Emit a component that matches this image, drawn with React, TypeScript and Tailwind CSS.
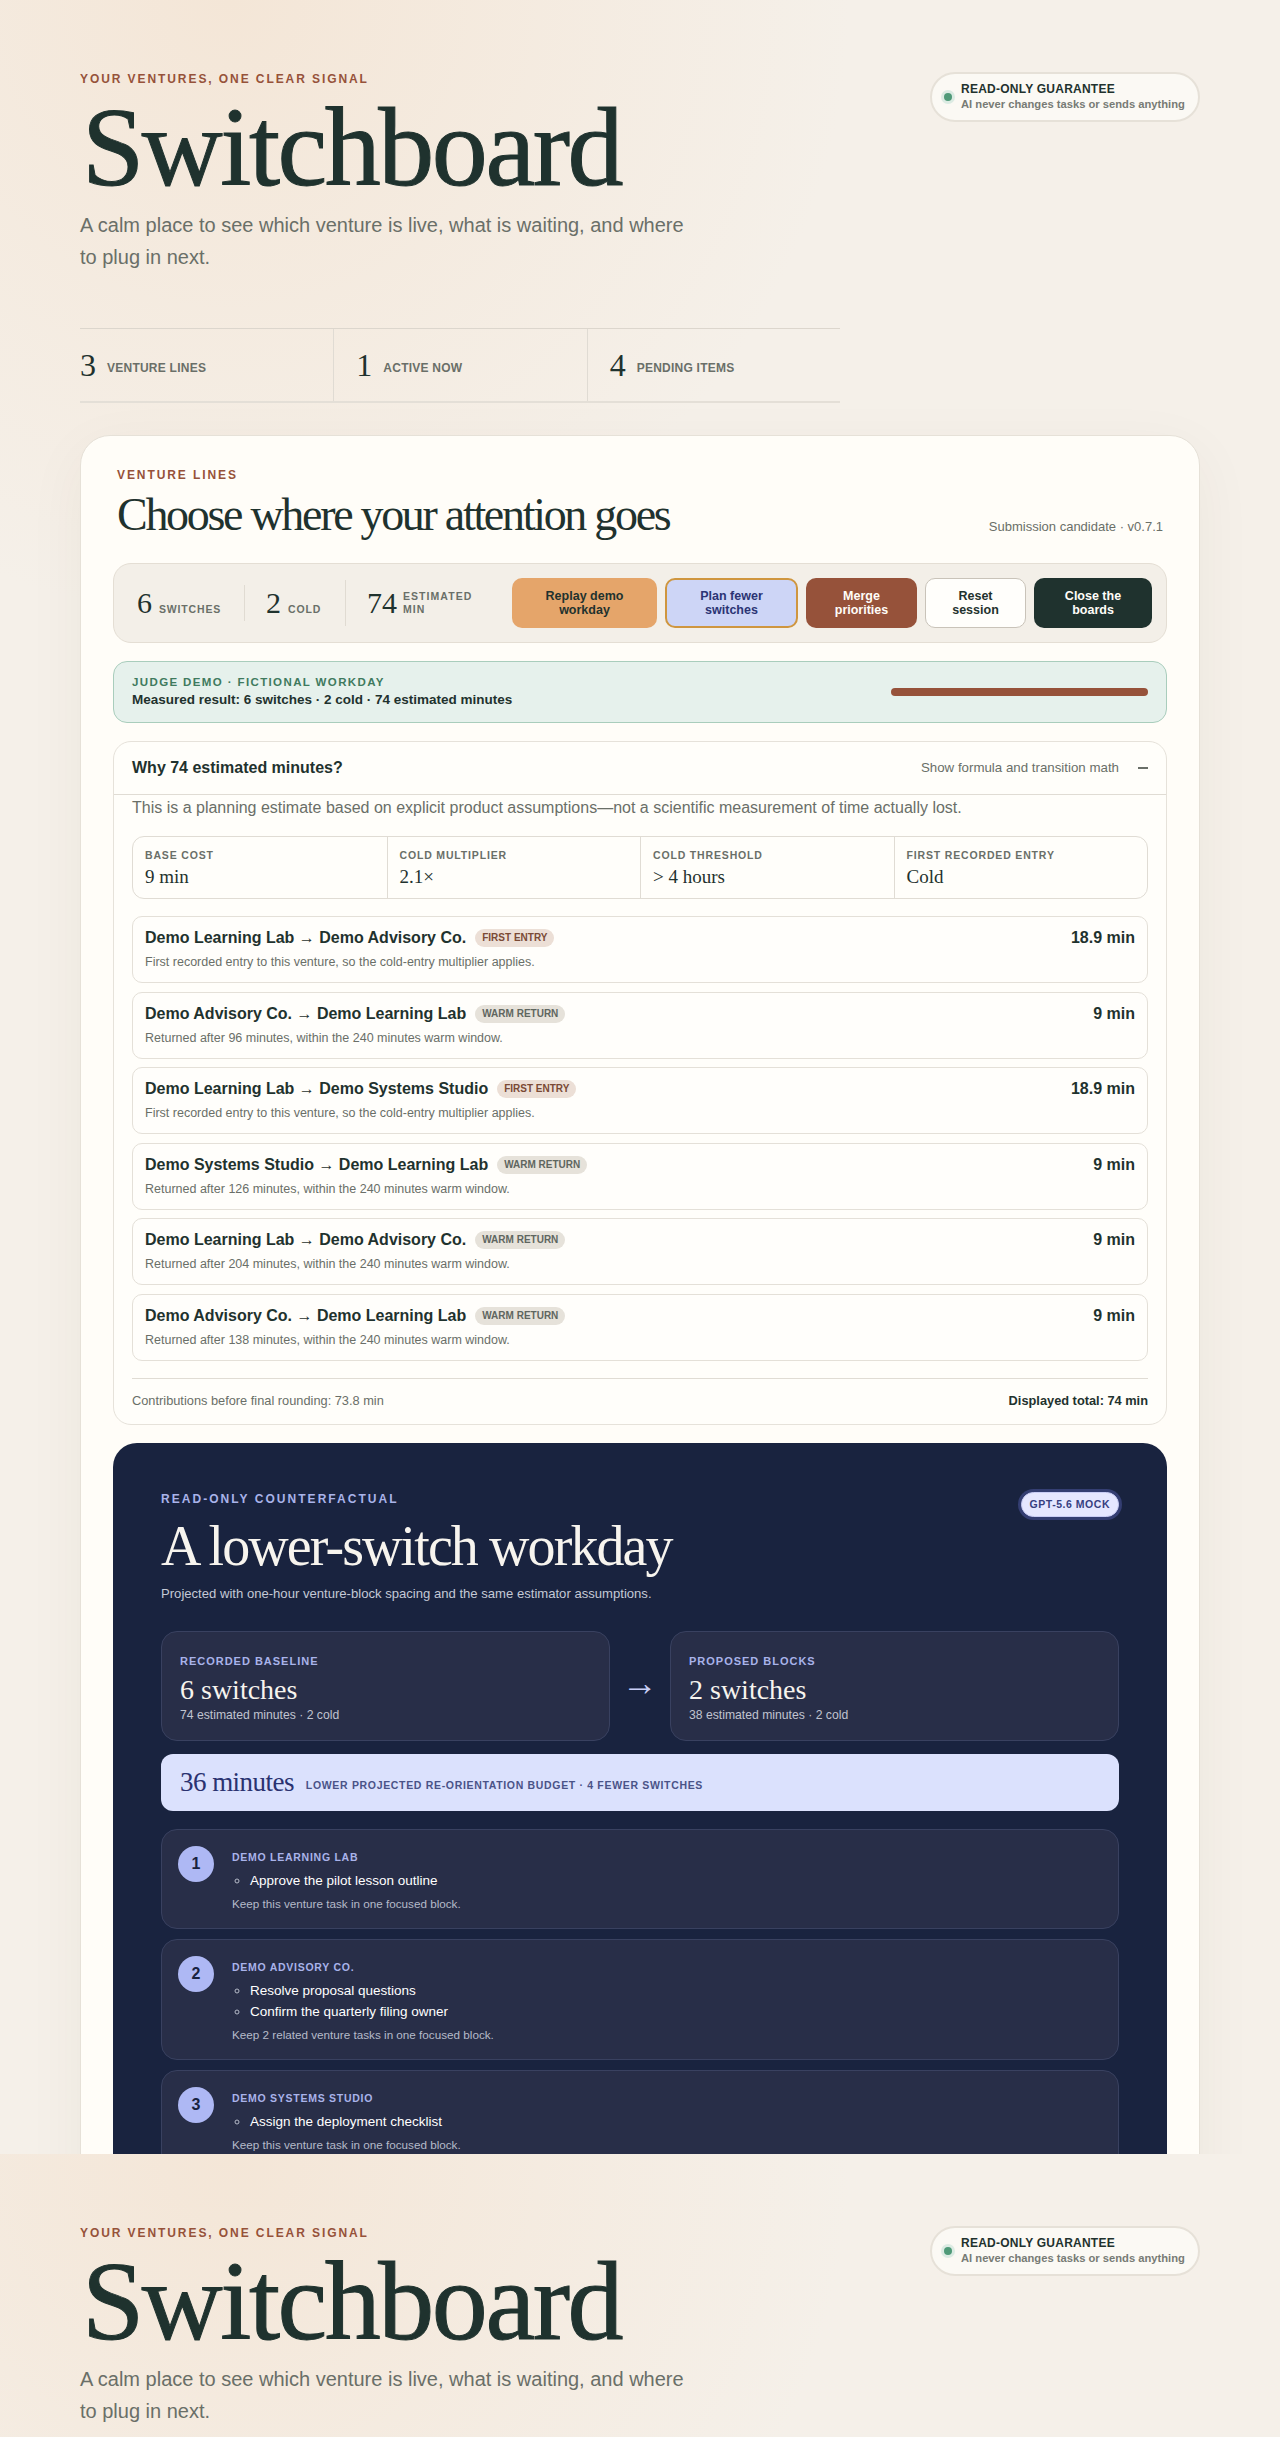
const serif = "font-['Liberation_Serif',Georgia,serif]";

const metrics = [
  { n: "3", label: "VENTURE LINES" },
  { n: "1", label: "ACTIVE NOW" },
  { n: "4", label: "PENDING ITEMS" },
];

const assumptions = [
  { label: "BASE COST", value: "9 min" },
  { label: "COLD MULTIPLIER", value: "2.1×" },
  { label: "COLD THRESHOLD", value: "> 4 hours" },
  { label: "FIRST RECORDED ENTRY", value: "Cold" },
];

const firstNote = "First recorded entry to this venture, so the cold-entry multiplier applies.";

const transitions = [
  { title: "Demo Learning Lab → Demo Advisory Co.", cold: true, note: firstNote, cost: "18.9 min" },
  { title: "Demo Advisory Co. → Demo Learning Lab", cold: false, note: "Returned after 96 minutes, within the 240 minutes warm window.", cost: "9 min" },
  { title: "Demo Learning Lab → Demo Systems Studio", cold: true, note: firstNote, cost: "18.9 min" },
  { title: "Demo Systems Studio → Demo Learning Lab", cold: false, note: "Returned after 126 minutes, within the 240 minutes warm window.", cost: "9 min" },
  { title: "Demo Learning Lab → Demo Advisory Co.", cold: false, note: "Returned after 204 minutes, within the 240 minutes warm window.", cost: "9 min" },
  { title: "Demo Advisory Co. → Demo Learning Lab", cold: false, note: "Returned after 138 minutes, within the 240 minutes warm window.", cost: "9 min" },
];

const blocks = [
  { n: 1, name: "DEMO LEARNING LAB", tasks: ["Approve the pilot lesson outline"], note: "Keep this venture task in one focused block." },
  { n: 2, name: "DEMO ADVISORY CO.", tasks: ["Resolve proposal questions", "Confirm the quarterly filing owner"], note: "Keep 2 related venture tasks in one focused block." },
  { n: 3, name: "DEMO SYSTEMS STUDIO", tasks: ["Assign the deployment checklist"], note: "Keep this venture task in one focused block." },
];

function Hero() {
  return (
    <div className="flex items-start justify-between pt-[72px]">
      <div>
        <p className="text-[12px] leading-[14px] font-bold tracking-[0.16em] text-[#96523a]">
          YOUR VENTURES, ONE CLEAR SIGNAL
        </p>
        <h1 className={`${serif} mt-[8px] ml-[2px] h-[106px] text-[112px] leading-[106px] tracking-[-0.022em] text-[#1f322e] [-webkit-text-stroke:1px_#1f322e]`}>
          Switchboard
        </h1>
        <p className="mt-[9px] w-[620px] text-[20px] leading-[32px] text-[#6a6f68]">
          A calm place to see which venture is live, what is waiting, and where to plug in next.
        </p>
      </div>
      {/* Guarantee pill */}
      <div className="flex h-[50px] w-[270px] items-center gap-[6px] rounded-full border-2 border-[#e6e1d8] bg-[#fbf9f4] pl-[12px]">
        <span className="h-[8px] w-[8px] rounded-full bg-[#4f9a78] shadow-[0_0_0_3px_#dcebe3]" />
        <div className="ml-[3px]">
          <p className="text-[12px] leading-[15px] font-bold tracking-[0.02em] text-[#1f322e]">READ-ONLY GUARANTEE</p>
          <p className="text-[11.2px] leading-[15px] font-bold text-[#777b75]">AI never changes tasks or sends anything</p>
        </div>
      </div>
    </div>
  );
}

function Toolbar() {
  return (
    <div className="mt-[21px] flex h-[80px] items-center rounded-[18px] border border-[#e4ded4] bg-[#f3efe8] pl-[23px] pr-[14px]">
      <div className="flex w-[107px] items-baseline gap-[7px]">
        <span className={`${serif} text-[30px] leading-none text-[#1f322e]`}>6</span>
        <span className="text-[10.5px] font-bold tracking-[0.08em] text-[#6a6f68]">SWITCHES</span>
      </div>
      <div className="h-[36px] border-l border-[#e0dbd2]" />
      <div className="flex w-[100px] items-baseline gap-[7px] pl-[21px]">
        <span className={`${serif} text-[30px] leading-none text-[#1f322e]`}>2</span>
        <span className="text-[10.5px] font-bold tracking-[0.08em] text-[#6a6f68]">COLD</span>
      </div>
      <div className="h-[46px] border-l border-[#e0dbd2]" />
      <div className="flex items-center gap-[6px] pl-[21px]">
        <span className={`${serif} text-[30px] leading-none text-[#1f322e]`}>74</span>
        <span className="w-[70px] text-[10.5px] leading-[13px] font-bold tracking-[0.1em] text-[#6a6f68]">ESTIMATED MIN</span>
      </div>
      <div className="ml-auto flex gap-[8px] text-center text-[12.5px] leading-[14px] font-bold">
        <button className="h-[50px] w-[145px] rounded-[10px] bg-[#e5a56a] text-[#1f322e]">Replay demo<br />workday</button>
        <button className="h-[50px] w-[133px] rounded-[10px] border-2 border-[#cf963f] bg-[#cdd5f6] text-[#2b3474]">Plan fewer<br />switches</button>
        <button className="h-[50px] w-[111px] rounded-[10px] bg-[#96523a] text-[#fffdf8]">Merge<br />priorities</button>
        <button className="h-[50px] w-[101px] rounded-[10px] border border-[#c9c3b9] bg-[#fffefb] text-[#1f322e]">Reset<br />session</button>
        <button className="h-[50px] w-[118px] rounded-[10px] bg-[#1f322e] text-[#fffdf8]">Close the<br />boards</button>
      </div>
    </div>
  );
}

function Breakdown() {
  return (
    <section className="mt-[18px] h-[684px] rounded-[18px] border border-[#e6e2da] bg-[#fffefa]">
      <div className="flex h-[53px] items-center justify-between border-b border-[#e0dcd4] px-[18px]">
        <h3 className="text-[16px] font-bold text-[#1f322e]">Why 74 estimated minutes?</h3>
        <div className="flex items-center gap-[19px] text-[13.3px] text-[#6a6f68]">
          <span>Show formula and transition math</span>
          <span className="h-[2px] w-[10px] bg-[#6a6f68]" />
        </div>
      </div>
      <div className="px-[18px]">
        <p className="mt-[1px] text-[16px] leading-[24px] text-[#6a6f68]">
          This is a planning estimate based on explicit product assumptions—not a scientific measurement of time actually lost.
        </p>
        <div className="mt-[16px] grid h-[63px] grid-cols-4 rounded-[12px] border border-[#e0dcd4]">
          {assumptions.map((a, i) => (
            <div key={a.label} className={`px-[12px] pt-[11px] ${i > 0 ? "border-l border-[#e0dcd4]" : ""}`}>
              <p className="text-[10.5px] leading-[14px] font-bold tracking-[0.08em] text-[#6a6f68]">{a.label}</p>
              <p className={`${serif} mt-[4px] text-[19px] leading-[22px] text-[#1f322e]`}>{a.value}</p>
            </div>
          ))}
        </div>
        <div className="mt-[17px] flex flex-col gap-[8.5px]">
          {transitions.map((t, i) => (
            <div key={i} className="flex h-[67px] items-start justify-between rounded-[10px] border border-[#e4e0d8] bg-[#fffefb] px-[12px] pt-[10px]">
              <div>
                <div className="flex items-center gap-[9px]">
                  <span className="text-[16px] leading-[22px] font-bold text-[#1f322e]">{t.title}</span>
                  {t.cold ? (
                    <span className="rounded-full bg-[#ecdfd6] px-[7px] text-[10px] leading-[18px] font-bold text-[#7a4a35]">FIRST ENTRY</span>
                  ) : (
                    <span className="rounded-full bg-[#e6e2da] px-[7px] text-[10px] leading-[18px] font-bold text-[#5f6660]">WARM RETURN</span>
                  )}
                </div>
                <p className="mt-[5px] text-[12.5px] leading-[16px] text-[#6a6f68]">{t.note}</p>
              </div>
              <span className="text-[16px] leading-[22px] font-bold text-[#1f322e]">{t.cost}</span>
            </div>
          ))}
        </div>
        <div className="mt-[17px] flex h-[46px] items-center justify-between border-t border-[#e0dcd4] text-[12.8px]">
          <span className="text-[#6a6f68]">Contributions before final rounding: 73.8 min</span>
          <span className="font-bold text-[#1f322e]">Displayed total: 74 min</span>
        </div>
      </div>
    </section>
  );
}

function Counterfactual() {
  return (
    <section className="mt-[18px] rounded-[24px] bg-[#19233f] px-[48px] pt-[47px] pb-[48px]">
      <div className="flex items-start justify-between">
        <div>
          <p className="text-[12px] leading-[18px] font-bold tracking-[0.17em] text-[#a9b3ea]">READ-ONLY COUNTERFACTUAL</p>
          <h2 className={`${serif} mt-[7px] text-[56px] leading-[62px] tracking-[-0.034em] text-[#f7f4ee]`}>A lower-switch workday</h2>
          <p className="mt-[8px] text-[13.1px] leading-[18px] text-[#c4c9d6]">
            Projected with one-hour venture-block spacing and the same estimator assumptions.
          </p>
        </div>
        <span className="mt-[2px] rounded-full border border-[#c9cdf5] bg-[#e5e7ff] px-[8px] text-[10.5px] leading-[23px] font-bold tracking-[0.05em] text-[#37407f] shadow-[0_0_0_3px_#343e72]">
          GPT-5.6 MOCK
        </span>
      </div>

      <div className="mt-[28px] grid h-[110px] grid-cols-[449px_1fr_449px]">
        <Outcome label="RECORDED BASELINE" value="6 switches" sub="74 estimated minutes · 2 cold" />
        <div className={`${serif} flex items-center justify-center pb-[6px] text-[36px] text-[#c9cff7]`}>→</div>
        <Outcome label="PROPOSED BLOCKS" value="2 switches" sub="38 estimated minutes · 2 cold" />
      </div>

      <div className="mt-[13px] flex h-[57px] items-center gap-[12px] rounded-[12px] bg-[#dbe1fd] px-[19px]">
        <span className={`${serif} text-[27px] tracking-[-0.02em] text-[#2a3270]`}>36 minutes</span>
        <span className="pt-[6px] text-[10.5px] font-bold tracking-[0.064em] text-[#4a5388]">
          LOWER PROJECTED RE-ORIENTATION BUDGET · 4 FEWER SWITCHES
        </span>
      </div>

      <div className="mt-[18px] flex flex-col gap-[10px]">
        {blocks.map((b) => (
          <div key={b.n} className="flex gap-[18px] rounded-[16px] border border-[#394160] bg-[#282e48] px-[16px] pt-[16px] pb-[15px]">
            <span className="flex h-[36px] w-[36px] shrink-0 items-center justify-center rounded-full bg-[#aeb8f4] text-[16px] font-bold text-[#19233f]">
              {b.n}
            </span>
            <div className="pt-[3px]">
              <p className="text-[10.5px] leading-[16px] font-bold tracking-[0.07em] text-[#a9b3ea]">{b.name}</p>
              <ul className="mt-[5px] list-[circle] pl-[18px] text-[13.5px] leading-[21px] text-white marker:text-[#b5bac8]">
                {b.tasks.map((task) => (
                  <li key={task}>{task}</li>
                ))}
              </ul>
              <p className="mt-[4px] text-[11.7px] leading-[18px] text-[#b5bac8]">{b.note}</p>
            </div>
          </div>
        ))}
      </div>
    </section>
  );
}

function Outcome({ label, value, sub }: { label: string; value: string; sub: string }) {
  return (
    <div className="rounded-[16px] border border-[#394160] bg-[#282e48] px-[18px] pt-[21px]">
      <p className="text-[11px] leading-[16px] font-bold tracking-[0.09em] text-[#a9b3ea]">{label}</p>
      <p className={`${serif} mt-[4px] text-[28px] leading-[34px] text-[#f7f4ee]`}>{value}</p>
      <p className="text-[12.2px] leading-[16px] text-[#c0c4d0]">{sub}</p>
    </div>
  );
}

export default function App() {
  return (
    <div className="h-[2437px] w-[1280px] overflow-hidden font-['Liberation_Sans',Arial,sans-serif]">
      <div className="h-[2154px] overflow-hidden bg-[#f5f0e9] bg-[radial-gradient(circle_at_230px_0px,#f4e6d7,transparent_620px)] px-[80px]">
        <Hero />
        <div className="mt-[55px] grid h-[75px] w-[760px] grid-cols-3 border-t border-b-2 border-t-[#dcd6cd] border-b-[#e4dfd7]">
          {metrics.map((m, i) => (
            <div key={m.label} className={`flex items-center gap-[11px] ${i > 0 ? "border-l border-[#e0dbd3] pl-[22px]" : ""}`}>
              <span className={`${serif} text-[32px] leading-none text-[#1f322e]`}>{m.n}</span>
              <span className="pt-[6px] text-[12px] font-bold tracking-[0.02em] text-[#6a6f68]">{m.label}</span>
            </div>
          ))}
        </div>
        <main className="mt-[32px] h-[1800px] rounded-[30px] border border-[#e6e1d8] bg-[#fffdf8] px-[32px] pt-[31px] shadow-[0_16px_60px_rgba(70,55,40,0.05)]">
          <div className="flex items-end justify-between px-[4px]">
            <div>
              <p className="text-[12px] leading-[16px] font-bold tracking-[0.16em] text-[#96523a]">VENTURE LINES</p>
              <h2 className={`${serif} mt-[5px] text-[46px] leading-[54px] tracking-[-0.05em] text-[#1f322e]`}>Choose where your attention goes</h2>
            </div>
            <span className="pb-[6px] text-[13px] text-[#6a6f68]">Submission candidate · v0.7.1</span>
          </div>
          <Toolbar />
          {/* Demo banner */}
          <div className="mt-[18px] flex h-[62px] items-center justify-between rounded-[14px] border border-[#a9cdbc] bg-[#e6f1ec] pl-[18px] pr-[18px]">
            <div>
              <p className="text-[11.5px] leading-[14px] font-bold tracking-[0.12em] text-[#3f7a5e]">JUDGE DEMO · FICTIONAL WORKDAY</p>
              <p className="mt-[2px] text-[13.5px] leading-[18px] font-bold text-[#1f322e]">Measured result: 6 switches · 2 cold · 74 estimated minutes</p>
            </div>
            <div className="h-[8px] w-[257px] rounded-full bg-[#96523a]" />
          </div>
          <Breakdown />
          <Counterfactual />
        </main>
      </div>
      <div className="h-[283px] overflow-hidden bg-[#f5f0e9] bg-[radial-gradient(circle_at_230px_0px,#f4e6d7,transparent_620px)] px-[80px]">
        <Hero />
      </div>
    </div>
  );
}
